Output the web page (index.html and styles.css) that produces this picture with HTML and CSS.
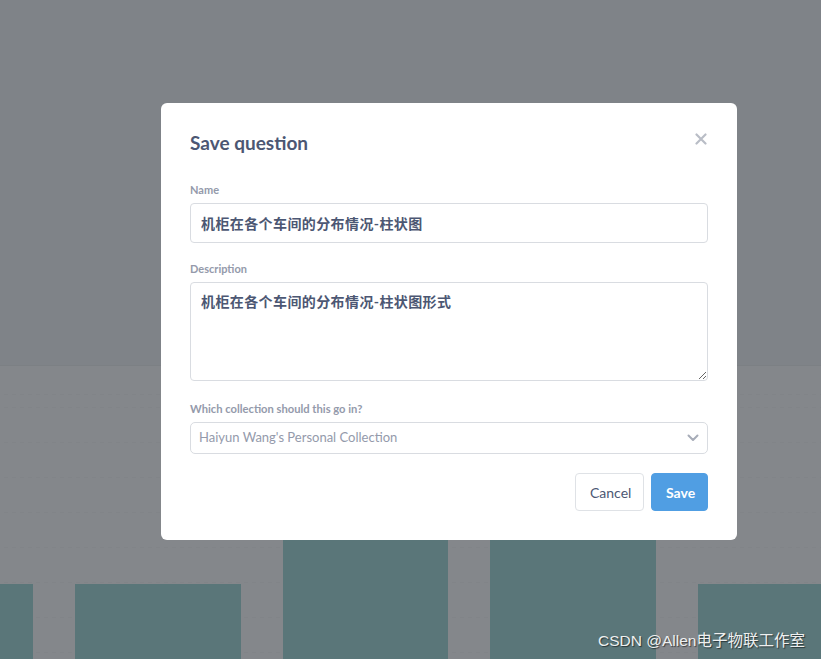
FILE: index.html
```html
<!DOCTYPE html>
<html lang="zh">
<head>
<meta charset="utf-8">
<title>Save question</title>
<link rel="stylesheet" href="styles.css">
</head>
<body>
<div class="page">
  <div class="top-area"></div>
  <div class="chart">
    <div class="bars">
      <div class="bar short"></div>
      <div class="bar short"></div>
      <div class="bar tall"></div>
      <div class="bar tall"></div>
      <div class="bar short"></div>
    </div>
  </div>

  <div class="modal">
    <button class="close" aria-label="Close">
      <svg width="12" height="12" viewBox="0 0 12 12"><path d="M1.5 1.5 L10.5 10.5 M10.5 1.5 L1.5 10.5" stroke="#b9bdc6" stroke-width="2.2" stroke-linecap="round"/></svg>
    </button>
    <h2 class="title">Save question</h2>

    <div class="field">
      <label class="label">Name</label>
      <input class="input" type="text" value="机柜在各个车间的分布情况-柱状图">
    </div>

    <div class="field desc">
      <label class="label">Description</label>
      <textarea class="input textarea">机柜在各个车间的分布情况-柱状图形式</textarea>
    </div>

    <div class="field last">
      <label class="label">Which collection should this go in?</label>
      <div class="select">
        <span>Haiyun Wang's Personal Collection</span>
        <svg width="12" height="8" viewBox="0 0 12 8"><path d="M1.5 1.5 L6 6 L10.5 1.5" fill="none" stroke="#a7acb8" stroke-width="2" stroke-linecap="round" stroke-linejoin="round"/></svg>
      </div>
    </div>

    <div class="actions">
      <button class="btn cancel">Cancel</button>
      <button class="btn save">Save</button>
    </div>
  </div>

  <div class="watermark">CSDN @Allen电子物联工作室</div>
</div>
</body>
</html>
```

FILE: styles.css
```css
* { box-sizing: border-box; }

html, body {
  margin: 0;
  padding: 0;
}

body {
  width: 821px;
  height: 659px;
  overflow: hidden;
  font-family: Lato, "Noto Sans CJK SC", sans-serif;
}

.page {
  position: relative;
  width: 821px;
  height: 659px;
  display: flex;
  flex-direction: column;
  background: #84878b;
}

.top-area {
  height: 366px;
  background: #7f8388;
  border-bottom: 1px solid #7c8084;
  flex: none;
}

.chart {
  flex: 1;
  display: flex;
  align-items: flex-end;
  overflow: hidden;
  background-image:
    repeating-linear-gradient(to right, #84878b 0 4px, transparent 4px 8px),
    repeating-linear-gradient(to bottom, rgba(0,0,0,0.02) 0 1px, transparent 1px 35px);
  background-position: 0 0, 0 41px;
}

.bars {
  display: flex;
  align-items: flex-end;
  gap: 42px;
  margin-left: -132.5px;
  height: 100%;
}

.bar {
  width: 165.5px;
  flex: none;
  background: #5a7679;
}

.bar.short { height: 75px; }
.bar.tall { height: 240px; }

.modal {
  position: absolute;
  left: 161px;
  top: 103px;
  width: 576px;
  background: #fff;
  border-radius: 6px;
  padding: 28px 29px 29px 29px;
}

.close {
  position: absolute;
  top: 30px;
  right: 30px;
  width: 12px;
  height: 12px;
  padding: 0;
  border: 0;
  background: none;
  display: flex;
}

.title {
  margin: 0 0 28px 0;
  font-size: 19px;
  line-height: 24px;
  font-weight: 700;
  color: #4c5773;
}

.field {
  display: flex;
  flex-direction: column;
  margin-bottom: 19px;
}

.field.desc {
  margin-bottom: 21px;
}

.field.last {
  margin-bottom: 19px;
}

.label {
  font-size: 11px;
  line-height: 13px;
  font-weight: 700;
  color: #949aab;
  margin-bottom: 7px;
}

.field.last .label {
  font-size: 11.2px;
}

.input {
  display: block;
  width: 100%;
  height: 40px;
  border: 1px solid #d9dce1;
  border-radius: 4px;
  padding: 0 10px;
  font-family: Lato, "Noto Sans CJK SC", sans-serif;
  font-size: 14px;
  font-weight: 700;
  letter-spacing: 0.4px;
  color: #4c5773;
  background: #fff;
  outline: none;
}

.textarea {
  height: 99px;
  padding: 9px 10px;
  line-height: 20px;
  resize: vertical;
  margin: 0;
}

.select {
  height: 32px;
  border: 1px solid #d9dce1;
  border-radius: 5px;
  padding: 0 8px 2px 8px;
  display: flex;
  align-items: center;
  justify-content: space-between;
  font-size: 13px;
  color: #949aab;
}

.select svg {
  margin-top: 2px;
}

.actions {
  display: flex;
  justify-content: flex-end;
  gap: 7px;
}

.btn {
  height: 38px;
  border-radius: 4px;
  font-family: Lato, sans-serif;
  font-size: 14px;
  padding: 0 14px;
}

.cancel {
  width: 69px;
  background: #fff;
  border: 1px solid #dfe2e6;
  color: #4c5773;
}

.save {
  width: 57px;
  background: #509ee3;
  border: 1px solid #509ee3;
  color: #fff;
  font-weight: 700;
}

.watermark {
  position: absolute;
  right: 16px;
  bottom: 9px;
  font-family: "Liberation Sans", "Noto Sans CJK SC", sans-serif;
  font-size: 15.5px;
  color: #eef0f0;
  text-shadow: 1px 1px 1px rgba(0,0,0,0.55);
}
```
